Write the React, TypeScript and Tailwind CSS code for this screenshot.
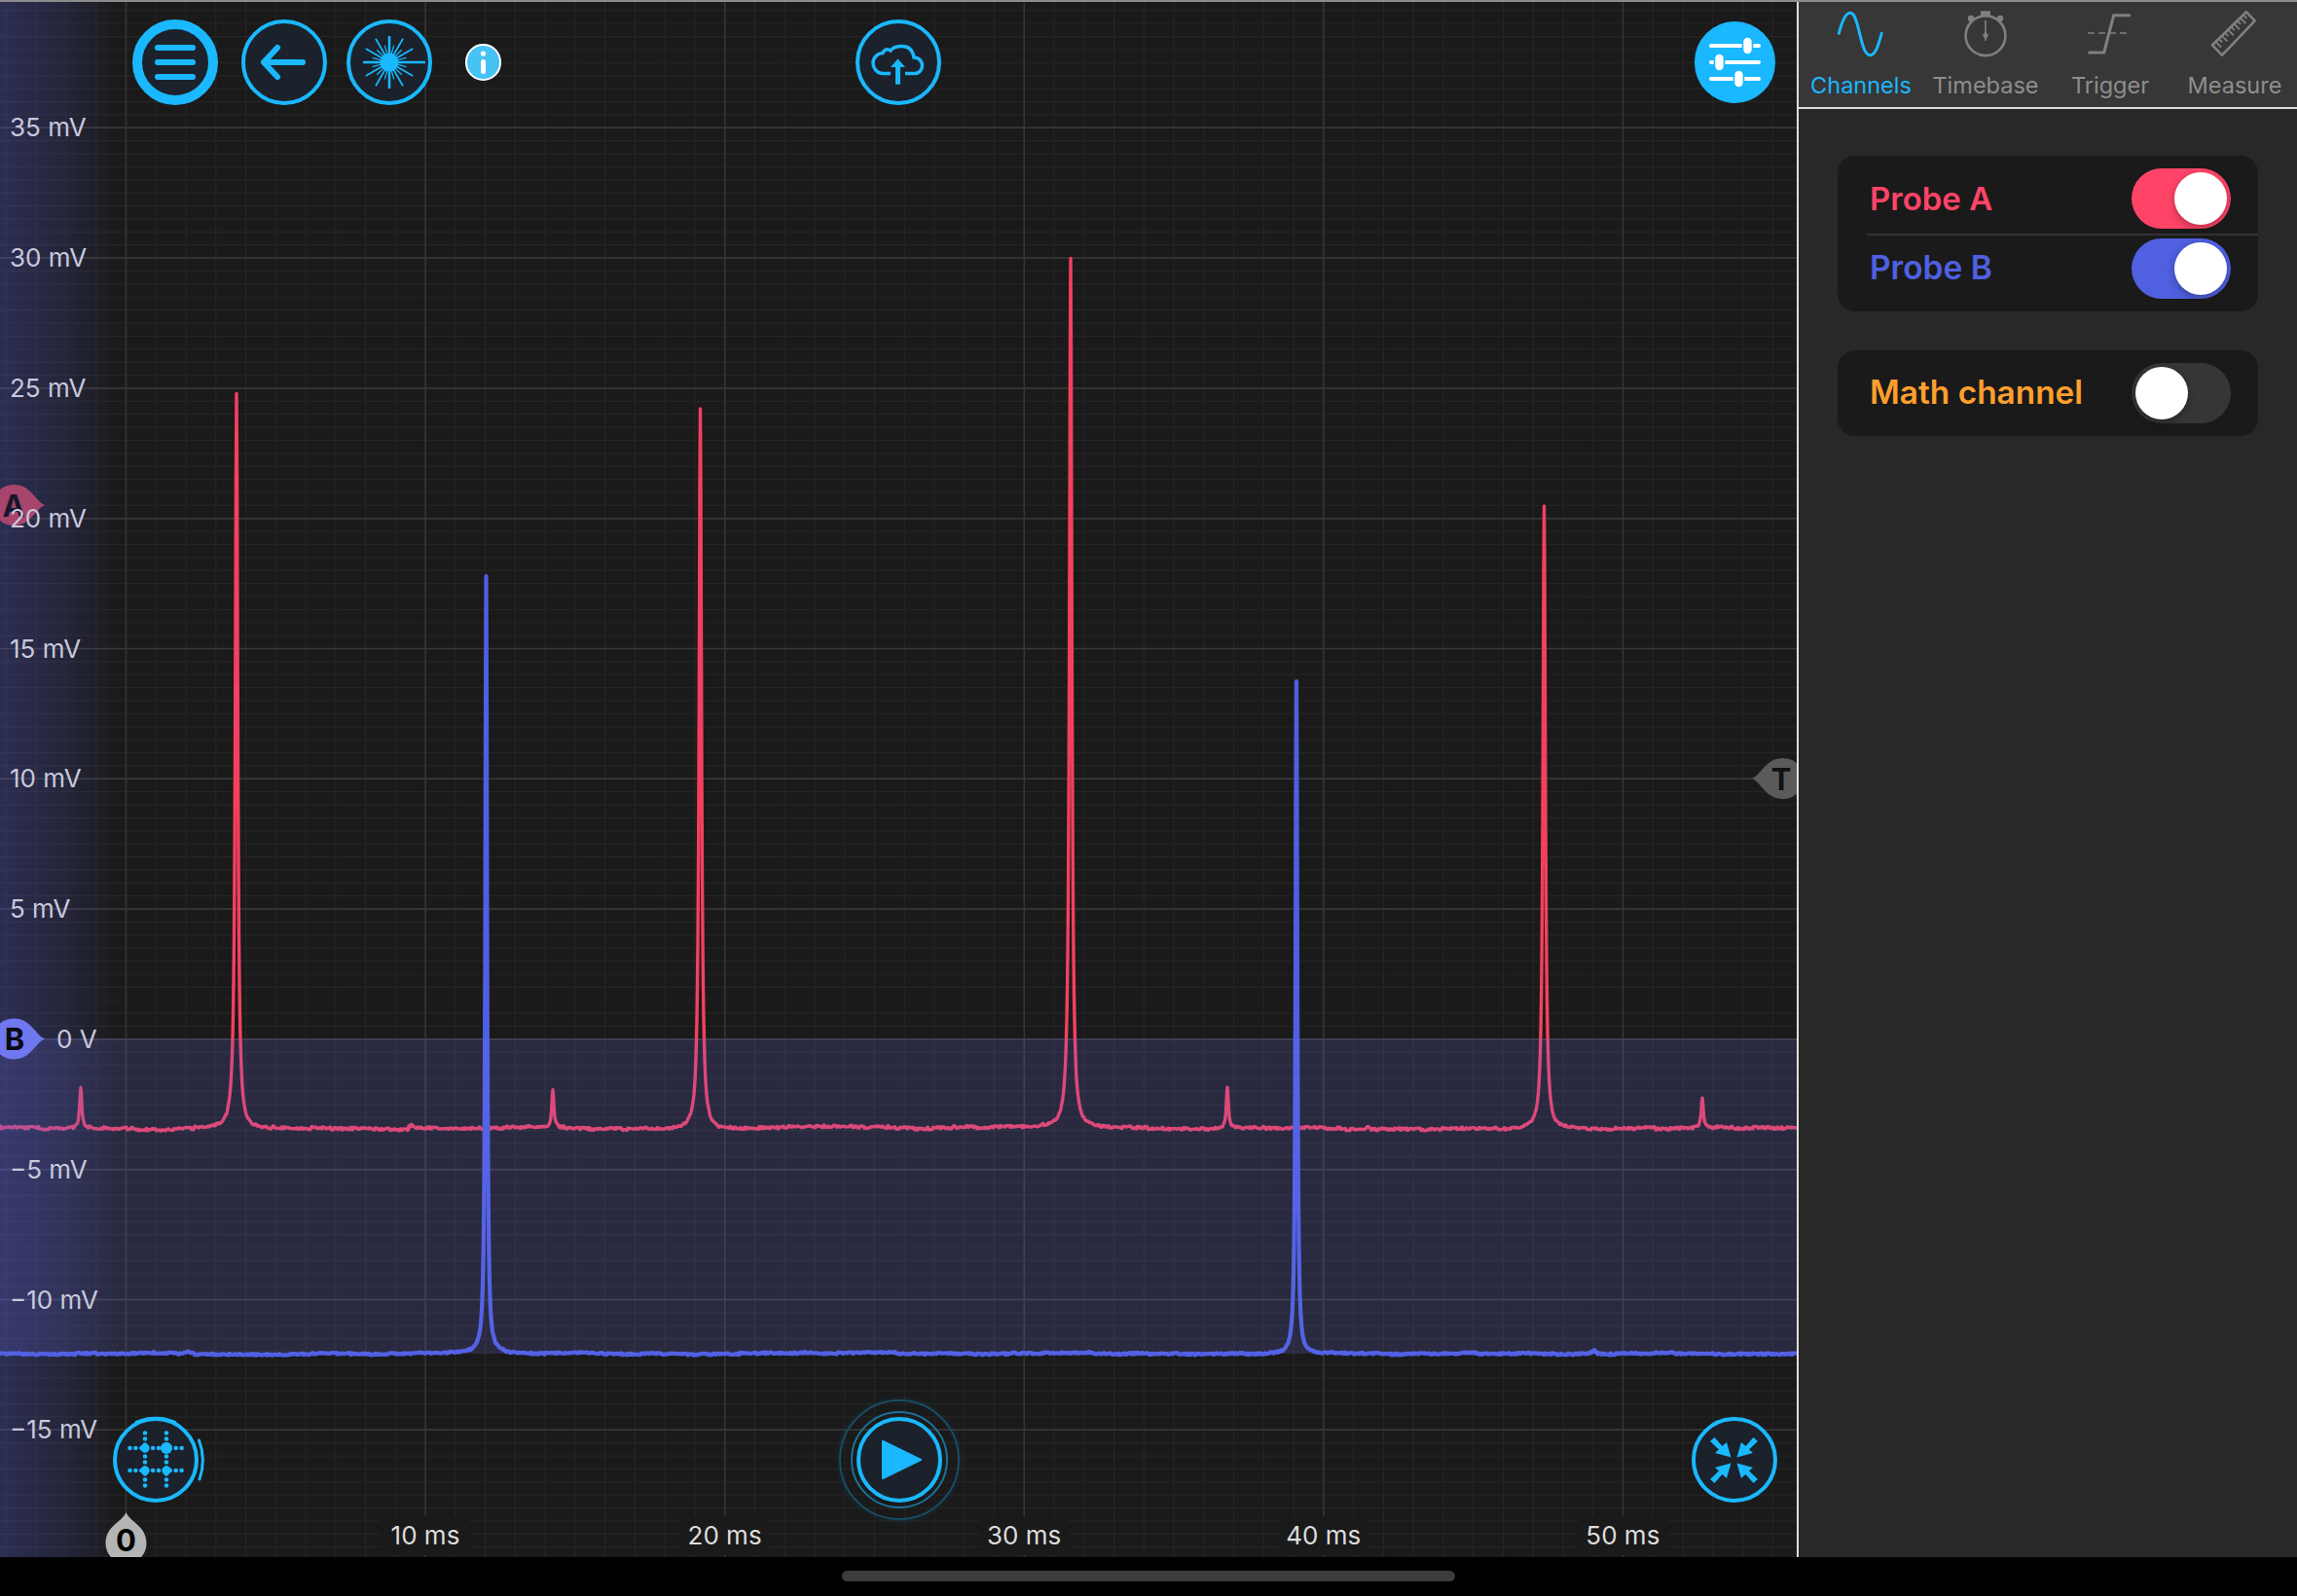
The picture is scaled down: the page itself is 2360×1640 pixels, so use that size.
import React from "react";

const BLUE = "#1ab8ff";

function rng(seed: number) {
  let a = seed;
  return () => {
    a |= 0;
    a = (a + 0x6d2b79f5) | 0;
    let t = Math.imul(a ^ (a >>> 15), 1 | a);
    t = (t + Math.imul(t ^ (t >>> 7), 61 | t)) ^ t;
    return ((t ^ (t >>> 14)) >>> 0) / 4294967296;
  };
}

type Peak = { x: number; a: number; w: number };

function trace(seed: number, base: number, peaks: Peak[], noise: number) {
  const r = rng(seed);
  let d = "";
  let n = 0;
  let drift = 0;
  for (let i = 0; i <= 3692; i++) {
    const x = i / 2;
    if (i % 3 === 0) n = (r() - 0.5) * noise;
    if (i % 40 === 0) drift = drift * 0.6 + (r() - 0.5) * noise * 0.9;
    let y = base + n + drift;
    for (const p of peaks) {
      const u = (x - p.x) / p.w;
      y -= p.a / (1 + u * u);
    }
    d += (i === 0 ? "M" : "L") + x.toFixed(1) + " " + y.toFixed(1);
  }
  return d;
}

const redPath = trace(
  7,
  1159.5,
  [
    { x: 243, a: 756, w: 1.5 },
    { x: 719.5, a: 742, w: 1.5 },
    { x: 1100, a: 894, w: 1.5 },
    { x: 1586.5, a: 641, w: 1.5 },
    { x: 83, a: 42, w: 1.3 },
    { x: 568, a: 40, w: 1.3 },
    { x: 1261, a: 42, w: 1.3 },
    { x: 1749, a: 32, w: 1.3 },
    { x: 423, a: 5, w: 1.5 },
    { x: 1405, a: 3, w: 2 },
  ],
  2.6
);
const bluePath = trace(
  21,
  1391,
  [
    { x: 499.5, a: 797, w: 1.1 },
    { x: 1332, a: 691, w: 1.1 },
    { x: 193, a: 2, w: 2 },
    { x: 1638, a: 3, w: 2 },
  ],
  1.7
);

const hMinor: number[] = [];
for (let k = -9; k < 110; k++) hMinor.push(131.3 + k * 13.38);
const vMinor: number[] = [];
for (let k = -4; k < 56; k++) vMinor.push(129.5 + k * 30.76);
const hMajor: number[] = [];
for (let k = 0; k < 11; k++) hMajor.push(131.3 + k * 133.8);
const vMajor: number[] = [];
for (let k = 0; k < 6; k++) vMajor.push(129.5 + k * 307.6);

const DROP = "M32 0C22 -4 18 -21 0 -21A21 21 0 0 0 0 21C18 21 22 4 32 0Z";

function Scope() {
  return (
    <svg className="absolute inset-0 h-[1598px] w-[1846px]" viewBox="0 2 1846 1598">
      <defs>
        <linearGradient id="edge" x1="0" x2="1" y1="0" y2="0">
          <stop offset="0" stopColor="#5a60e0" stopOpacity="0.28" />
          <stop offset="0.5" stopColor="#5a60e0" stopOpacity="0.17" />
          <stop offset="1" stopColor="#5a60e0" stopOpacity="0" />
        </linearGradient>
      </defs>
      {hMinor.map((y) => (
        <line key={y} x1="0" x2="1846" y1={y} y2={y} stroke="#252525" strokeWidth="1.2" />
      ))}
      {vMinor.map((x) => (
        <line key={x} x1={x} x2={x} y1="0" y2="1600" stroke="#252525" strokeWidth="1.2" />
      ))}
      {hMajor.map((y) => (
        <line key={y} x1="0" x2="1846" y1={y} y2={y} stroke="#3a3a3a" strokeWidth="1.5" />
      ))}
      {vMajor.map((x) => (
        <line key={x} x1={x} x2={x} y1="0" y2="1600" stroke="#363636" strokeWidth="1.5" />
      ))}
      <path d={redPath} fill="none" stroke="#f4405f" strokeWidth="3.4" strokeLinejoin="round" />
      <path d={bluePath} fill="none" stroke="#4f5fe4" strokeWidth="4.2" strokeLinejoin="round" />
      <rect x="0" y="1067" width="1846" height="324" fill="#7479f1" fillOpacity="0.175" />
      <rect x="0" y="0" width="124" height="1600" fill="url(#edge)" />
      <path d={DROP} transform="translate(14 519)" fill="#a8456c" />
      <path d={DROP} transform="translate(14 1067.5)" fill="#6f78ee" />
      <path d={DROP} transform="translate(1832 800) rotate(180)" fill="#5a5a5a" />
      <path d={DROP} transform="translate(129.5 1586) rotate(-90)" fill="#b4b4b4" />
    </svg>
  );
}

function Round({
  children,
  thick,
  className,
}: {
  children: React.ReactNode;
  thick?: boolean;
  className?: string;
}) {
  return (
    <div
      className={`relative h-[88px] w-[88px] shrink-0 rounded-full bg-[#1b222c] border-[#1ab8ff] ${
        thick ? "border-[10px]" : "border-[4px]"
      } ${className ?? ""}`}
    >
      {children}
    </div>
  );
}

function Local({ inset, children }: { inset: "thin" | "thick"; children: React.ReactNode }) {
  return (
    <svg
      viewBox="0 0 88 88"
      className={`absolute h-[88px] w-[88px] overflow-visible ${
        inset === "thick" ? "-left-[10px] -top-[10px]" : "-left-[4px] -top-[4px]"
      }`}
    >
      {children}
    </svg>
  );
}

const rays: { a: number; r: number }[] = [];
for (let i = 0; i < 24; i++) {
  rays.push({ a: (i * Math.PI) / 12, r: i === 0 ? 37 : i % 6 === 0 ? 27 : i % 2 === 0 ? 28 : 18 });
}

const gridDots: { x: number; y: number }[] = [];
for (let s = 0; s <= 9; s++) {
  const p = 17.5 + s * 5.9;
  gridDots.push({ x: p, y: 32 }, { x: p, y: 55 });
  const q = 16.5 + s * 6;
  gridDots.push({ x: 33, y: q }, { x: 55, y: q });
}

function Toolbar() {
  return (
    <div className="absolute left-[136px] right-[22px] top-[18px] flex h-[88px] items-center">
      <Round thick>
        <Local inset="thick">
          <rect x="23" y="26" width="42" height="6" rx="3" fill={BLUE} />
          <rect x="23" y="41" width="42" height="6" rx="3" fill={BLUE} />
          <rect x="23" y="56" width="42" height="6" rx="3" fill={BLUE} />
        </Local>
      </Round>
      <Round className="ml-[24px]">
        <Local inset="thin">
          <path
            d="M23 44H63M37 29L23 44L37 59"
            fill="none"
            stroke={BLUE}
            strokeWidth="6"
            strokeLinecap="round"
            strokeLinejoin="round"
          />
        </Local>
      </Round>
      <Round className="ml-[20px]">
        <Local inset="thin">
          <circle cx="44" cy="44" r="9.5" fill={BLUE} />
          {rays.map((p, i) => (
            <line
              key={i}
              x1="44"
              y1="44"
              x2={44 + p.r * Math.cos(p.a)}
              y2={44 + p.r * Math.sin(p.a)}
              stroke={BLUE}
              strokeWidth={i % 6 === 0 ? 2.6 : i % 2 === 0 ? 1.7 : 1.2}
            />
          ))}
        </Local>
      </Round>
      <div className="relative ml-[34px] h-[38px] w-[37px] shrink-0 rounded-full border-2 border-white bg-[#45c3f5]">
        <svg viewBox="0 0 33 34" className="absolute inset-0 h-[34px] w-[33px]">
          <circle cx="16.5" cy="8" r="2.6" fill="#fff" />
          <rect x="14" y="14" width="5" height="15" rx="2.5" fill="#fff" />
        </svg>
      </div>
      <Round className="ml-[364px]">
        <Local inset="thin">
          <path
            d="M36 55.5H28C22 55.5 18 50 18 45C18 39 23 34.5 28 34.5C29 31 33 29.5 36 32C38 29 43 27.5 48 27.5C56 27.5 59 33 60 39C65 39 68.5 43 68.5 47.5C68.5 52 65 55.5 61 55.5H51"
            fill="none"
            stroke={BLUE}
            strokeWidth="3.5"
          />
          <path d="M43.5 40.5L51 49H46V66.7H41V49H36Z" fill={BLUE} />
        </Local>
      </Round>
      <div className="relative ml-auto h-[84px] w-[83px] shrink-0 rounded-full bg-[#1ab8ff]">
        <svg viewBox="0 0 83 84" className="absolute inset-0 h-[84px] w-[83px]">
          <g stroke="#fff" strokeWidth="4" strokeLinecap="round">
            <line x1="17" x2="66" y1="25" y2="25" />
            <line x1="17" x2="66" y1="42" y2="42" />
            <line x1="17" x2="66" y1="59" y2="59" />
          </g>
          <g fill="#fff" stroke={BLUE} strokeWidth="1.6">
            <rect x="49.5" y="16" width="10" height="18" rx="5" />
            <rect x="20.5" y="33" width="10" height="18" rx="5" />
            <rect x="40.5" y="50" width="10" height="18" rx="5" />
          </g>
        </svg>
      </div>
    </div>
  );
}

const ARROW = "-3,-3 -7.5,-18.5 -12,-14.5 -20,-23.5 -24.5,-19.5 -15.5,-11 -19.5,-7.5";

function BottomBar() {
  return (
    <div className="absolute left-[116px] right-[20px] top-[1454px] flex h-[88px] items-center">
      <Round>
        <Local inset="thin">
          <path d="M24 5.5Q44 -3 64 5.5" fill="none" stroke={BLUE} strokeWidth="3" strokeLinecap="round" />
          <path d="M88.5 24Q96 44 89 64" fill="none" stroke={BLUE} strokeWidth="3" strokeLinecap="round" />
          {gridDots.map((d, i) => (
            <circle key={i} cx={d.x} cy={d.y} r="2.3" fill={BLUE} />
          ))}
          <circle cx="33" cy="32" r="4.6" fill={BLUE} />
          <circle cx="33" cy="55" r="4.6" fill={BLUE} />
          <circle cx="55" cy="55" r="4.6" fill={BLUE} />
          <circle cx="55" cy="32" r="6" fill={BLUE} />
        </Local>
      </Round>
      <Round className="ml-[676px]">
        <div className="absolute -inset-[10px] rounded-full border-2 border-[#1b7198]" />
        <div className="absolute -inset-[22px] rounded-full border-2 border-[#174d66] shadow-[0_0_6px_rgba(26,184,255,0.15)]" />
        <Local inset="thin">
          <path d="M27 25L66 44L27 63Z" fill={BLUE} stroke={BLUE} strokeWidth="2" strokeLinejoin="round" />
        </Local>
      </Round>
      <Round className="ml-auto">
        <Local inset="thin">
          <g fill={BLUE} transform="translate(43.5 44.5)">
            <polygon points={ARROW} />
            <polygon points={ARROW} transform="scale(-1 1)" />
            <polygon points={ARROW} transform="scale(1 -1)" />
            <polygon points={ARROW} transform="scale(-1 -1)" />
          </g>
        </Local>
      </Round>
    </div>
  );
}

const yLabels = ["35 mV", "30 mV", "25 mV", "20 mV", "15 mV", "10 mV", "5 mV", "0 V", "−5 mV", "−10 mV", "−15 mV"];
const xLabels = ["10 ms", "20 ms", "30 ms", "40 ms", "50 ms"];

function Badge({ className, children }: { className: string; children: string }) {
  return (
    <span
      className={`absolute flex h-[40px] w-[40px] items-center justify-center text-[31px] font-bold leading-none ${className}`}
    >
      {children}
    </span>
  );
}

function Chart() {
  return (
    <div className="relative h-full w-[1846px] shrink-0 overflow-hidden bg-[#1a1a1a]">
      <Scope />
      <Badge className="left-[-6px] top-[497px] text-[#17172c]">A</Badge>
      <Badge className="left-[-5px] top-[1045px] text-[#0a0a14]">B</Badge>
      <Badge className="left-[1810px] top-[778px] text-[#111111]">T</Badge>
      <div className="absolute left-[10px] top-[62.6px] flex flex-col">
        {yLabels.map((t) => (
          <div
            key={t}
            className={`flex h-[133.8px] items-center text-[26px] leading-none text-[#c8c8dc] ${
              t === "0 V" ? "ml-[48px]" : ""
            }`}
          >
            {t}
          </div>
        ))}
      </div>
      <div className="absolute left-[283.2px] top-[1556px] flex h-[40px]">
        {xLabels.map((t) => (
          <div key={t} className="flex w-[307.6px] justify-center">
            <span className="flex h-[40px] w-[91px] items-center justify-center bg-[#1a1a1a] text-[26px] leading-none text-[#dcdcdc]">
              {t}
            </span>
          </div>
        ))}
      </div>
      <Badge className="left-[109.5px] top-[1560px] text-[#000000]">0</Badge>
      <Toolbar />
      <BottomBar />
    </div>
  );
}

const rulerTicks: { x1: number; y1: number; x2: number; y2: number }[] = [];
for (let i = 0; i < 10; i++) {
  const t = 0.1 + i * 0.09;
  const x = 5 + 35 * t;
  const y = 38.3 - 34 * t;
  const l = i % 2 === 0 ? 8 : 5;
  rulerTicks.push({ x1: x, y1: y, x2: x + 0.7 * l, y2: y + 0.7 * l });
}

function TabIcon({ name }: { name: string }) {
  const grey = "#808080";
  if (name === "Channels")
    return (
      <path
        d="M5.3 26.3C8 16 12 5.3 17 5.3C22 5.3 24 16 26.7 26.7C29.5 38 32 48.7 37.4 48.7C43 48.7 46 38 49.2 26.3"
        fill="none"
        stroke={BLUE}
        strokeWidth="3"
        strokeLinecap="round"
      />
    );
  if (name === "Timebase")
    return (
      <g>
        <circle cx="28" cy="28.7" r="20.4" fill="none" stroke={grey} strokeWidth="2.6" />
        <rect x="23" y="3.3" width="10" height="6" fill={grey} />
        <circle cx="13" cy="11" r="3.2" fill={grey} />
        <circle cx="43" cy="11" r="3.2" fill={grey} />
        <line x1="28" x2="28" y1="13" y2="34" stroke={grey} strokeWidth="1.6" />
        <polygon points="28,24.5 31,28.5 28,32.5 25,28.5" fill={grey} />
      </g>
    );
  if (name === "Trigger")
    return (
      <g fill="none" stroke={grey}>
        <line x1="5" x2="49" y1="26" y2="26" strokeWidth="1.6" strokeDasharray="7 4" />
        <path d="M6.7 46H21.7L31.7 7.7H47.7" strokeWidth="3" strokeLinecap="round" strokeLinejoin="round" />
      </g>
    );
  return (
    <g fill="none" stroke={grey} strokeWidth="2.6" strokeLinejoin="round">
      <polygon points="5,38.3 40,4.3 48.7,13.3 15,48.7" />
      {rulerTicks.map((t, i) => (
        <line key={i} x1={t.x1} y1={t.y1} x2={t.x2} y2={t.y2} strokeWidth="1.8" />
      ))}
    </g>
  );
}

function Toggle({ on, color }: { on: boolean; color: string }) {
  return (
    <div
      className={`flex h-[62px] w-[102px] items-center rounded-full p-[4px] ${color} ${
        on ? "justify-end" : "justify-start"
      }`}
    >
      <div className="h-[54px] w-[54px] rounded-full bg-white shadow-[0_3px_8px_rgba(0,0,0,0.3)]" />
    </div>
  );
}

function Sidebar() {
  const tabs = ["Channels", "Timebase", "Trigger", "Measure"];
  return (
    <div className="flex h-full flex-1 flex-col bg-[#282828]">
      <div className="flex h-[108px] bg-[#373737]">
        {tabs.map((t) => (
          <div key={t} className="flex flex-1 flex-col items-center pt-[6px]">
            <svg viewBox="0 0 56 52" className="h-[52px] w-[56px]">
              <TabIcon name={t} />
            </svg>
            <span
              className={`mt-[13px] text-[23.5px] leading-[30px] ${
                t === "Channels" ? "text-[#1ab8ff]" : "text-[#8e8e8e]"
              }`}
            >
              {t}
            </span>
          </div>
        ))}
      </div>
      <div className="h-[2px] bg-[#dcdcdc]" />
      <div className="flex flex-col gap-[40px] px-[40px] pt-[48px]">
        <div className="h-[160px] rounded-[18px] bg-[#1a1a1a]">
          <div className="flex h-[80px] items-start justify-between pl-[33px] pr-[28px] pt-[13px]">
            <span className="flex h-[62px] items-center text-[33px] font-semibold leading-none text-[#ff4468]">
              Probe A
            </span>
            <Toggle on color="bg-[#ff4468]" />
          </div>
          <div className="ml-[30px] h-[2px] bg-[#333333]" />
          <div className="flex h-[78px] items-start justify-between pl-[33px] pr-[28px] pt-[3px]">
            <span className="flex h-[62px] items-center text-[33.5px] font-semibold leading-none text-[#4f60e0]">
              Probe B
            </span>
            <Toggle on color="bg-[#4f60e0]" />
          </div>
        </div>
        <div className="flex h-[88px] items-center justify-between rounded-[18px] bg-[#1a1a1a] pl-[33px] pr-[28px]">
          <span className="text-[33.4px] font-semibold leading-none text-[#ff9f2e]">Math channel</span>
          <Toggle on={false} color="bg-[#363638]" />
        </div>
      </div>
    </div>
  );
}

export default function App() {
  return (
    <div className="flex h-[1640px] w-[2360px] flex-col overflow-hidden bg-black font-[family-name:Inter,sans-serif]">
      <div className="h-[2px] bg-[#8c8c8c]" />
      <div className="flex h-[1598px]">
        <Chart />
        <div className="h-full w-[2px] bg-[#e0e0e0]" />
        <Sidebar />
      </div>
      <div className="flex h-[40px] justify-center pt-[14px]">
        <div className="h-[11px] w-[630px] rounded-[6px] bg-[#3c3c3c]" />
      </div>
    </div>
  );
}
